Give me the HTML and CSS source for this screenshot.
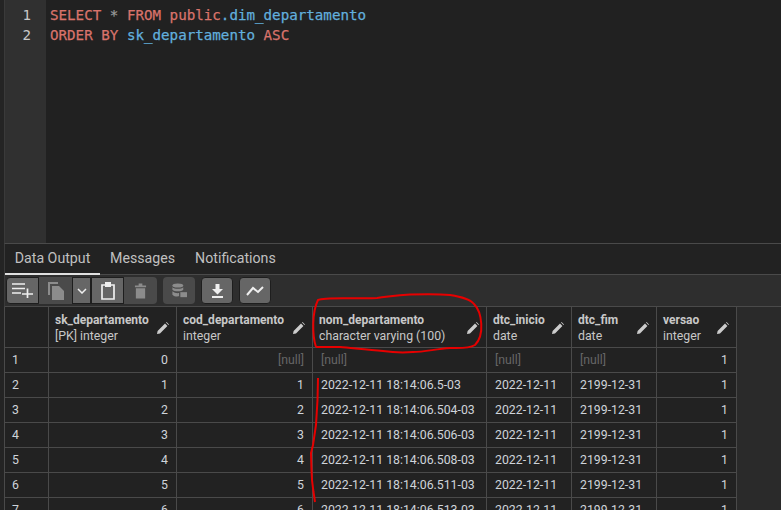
FILE: index.html
```html
<!DOCTYPE html>
<html lang="pt">
<head>
<meta charset="utf-8">
<title>Query</title>
<link rel="stylesheet" href="styles.css">
</head>
<body>
<div class="app">
  <section class="editor">
    <div class="gutter"><div>1</div><div>2</div></div>
    <div class="code">
      <div class="line"><span class="kw">SELECT</span> <span class="op">*</span> <span class="kw">FROM</span> <span class="kw">public</span><span class="id">.dim_departamento</span></div>
      <div class="line"><span class="kw">ORDER BY</span> <span class="id">sk_departamento</span> <span class="kw">ASC</span></div>
    </div>
  </section>
  <nav class="tabs">
    <div class="tab active">Data Output</div>
    <div class="tab">Messages</div>
    <div class="tab">Notifications</div>
  </nav>
  <div class="toolbar">
    <div class="group">
      <button class="btn w33 on"><svg width="21" height="15" viewBox="0 0 21 15"><path d="M0 1h13M0 5.500h13M0 10h9M10 11h11M15.500 5.500v9.500" fill="none" stroke="#efefef" stroke-width="1.700"/></svg></button>
      <button class="btn w33 off"><svg width="16" height="18" viewBox="0 0 16 18"><path d="M0 0h10v2H2v11H0z" fill="#8c8c8c"/><path d="M4 4h7l5 5v9H4z" fill="#8c8c8c"/></svg></button>
      <button class="btn w19 on"><svg width="10" height="6" viewBox="0 0 10 6"><path d="M1 1l4 4 4-4" fill="none" stroke="#efefef" stroke-width="1.500"/></svg></button>
      <button class="btn w33 on"><svg width="16" height="19" viewBox="0 0 16 19"><path d="M2 4h12v14H2z" fill="none" stroke="#efefef" stroke-width="1.700"/><path d="M5 1h6v5H5z" fill="#efefef"/></svg></button>
      <button class="btn w33 off"><svg width="13" height="16" viewBox="0 0 14 16"><path d="M1 2h12v2H1zM5 0h4v2H5zM2 5h10v11H2z" fill="#8c8c8c"/></svg></button>
    </div>
    <button class="btn w32 off solo"><svg width="15" height="17" viewBox="0 0 18 18"><ellipse cx="7" cy="3" rx="6.500" ry="2.500" fill="#8c8c8c"/><path d="M.5 5c2 2.500 11 2.500 13 0v3c-2 2.500-11 2.500-13 0zM.5 10c2 2 6 2.500 8 2v4c-3 .5-6.500 0-8-2z" fill="#8c8c8c"/><path d="M10 11h8v6h-8z" fill="#8c8c8c"/></svg></button>
    <button class="btn w32 on solo"><svg width="11" height="14" viewBox="0 0 11 14"><path d="M3.500 0h4v5H11L5.500 10.500 0 5h3.500zM0 12h11v2H0z" fill="#efefef"/></svg></button>
    <button class="btn w32 on solo"><svg width="18" height="10" viewBox="0 0 18 10"><path d="M1 9l6-7 5 4 5-5" fill="none" stroke="#efefef" stroke-width="2"/></svg></button>
  </div>
  <div class="grid">
    <div class="row head">
      <div class="cell c0"></div>
      <div class="cell c1"><div class="h"><b>sk_departamento</b><span>[PK] integer</span></div><svg class="pen" viewBox="0 0 12 12"><path d="M0 12l.6-3L8 1.600 10.400 4 3 11.400zM9 .6l.6-.6L12 2.400l-.6.6z"/></svg></div>
      <div class="cell c2"><div class="h"><b>cod_departamento</b><span>integer</span></div><svg class="pen" viewBox="0 0 12 12"><path d="M0 12l.6-3L8 1.600 10.400 4 3 11.400zM9 .6l.6-.6L12 2.400l-.6.6z"/></svg></div>
      <div class="cell c3"><div class="h"><b>nom_departamento</b><span>character varying (100)</span></div><svg class="pen" viewBox="0 0 12 12"><path d="M0 12l.6-3L8 1.600 10.400 4 3 11.400zM9 .6l.6-.6L12 2.400l-.6.6z"/></svg></div>
      <div class="cell c4"><div class="h"><b>dtc_inicio</b><span>date</span></div><svg class="pen" viewBox="0 0 12 12"><path d="M0 12l.6-3L8 1.600 10.400 4 3 11.400zM9 .6l.6-.6L12 2.400l-.6.6z"/></svg></div>
      <div class="cell c5"><div class="h"><b>dtc_fim</b><span>date</span></div><svg class="pen" viewBox="0 0 12 12"><path d="M0 12l.6-3L8 1.600 10.400 4 3 11.400zM9 .6l.6-.6L12 2.400l-.6.6z"/></svg></div>
      <div class="cell c6"><div class="h"><b>versao</b><span>integer</span></div><svg class="pen" viewBox="0 0 12 12"><path d="M0 12l.6-3L8 1.600 10.400 4 3 11.400zM9 .6l.6-.6L12 2.400l-.6.6z"/></svg></div>
    </div>
    <div class="row"><div class="cell c0">1</div><div class="cell c1 num">0</div><div class="cell c2 num null">[null]</div><div class="cell c3 null">[null]</div><div class="cell c4 null">[null]</div><div class="cell c5 null">[null]</div><div class="cell c6 num">1</div></div>
    <div class="row"><div class="cell c0">2</div><div class="cell c1 num">1</div><div class="cell c2 num">1</div><div class="cell c3">2022-12-11 18:14:06.5-03</div><div class="cell c4">2022-12-11</div><div class="cell c5">2199-12-31</div><div class="cell c6 num">1</div></div>
    <div class="row"><div class="cell c0">3</div><div class="cell c1 num">2</div><div class="cell c2 num">2</div><div class="cell c3">2022-12-11 18:14:06.504-03</div><div class="cell c4">2022-12-11</div><div class="cell c5">2199-12-31</div><div class="cell c6 num">1</div></div>
    <div class="row"><div class="cell c0">4</div><div class="cell c1 num">3</div><div class="cell c2 num">3</div><div class="cell c3">2022-12-11 18:14:06.506-03</div><div class="cell c4">2022-12-11</div><div class="cell c5">2199-12-31</div><div class="cell c6 num">1</div></div>
    <div class="row"><div class="cell c0">5</div><div class="cell c1 num">4</div><div class="cell c2 num">4</div><div class="cell c3">2022-12-11 18:14:06.508-03</div><div class="cell c4">2022-12-11</div><div class="cell c5">2199-12-31</div><div class="cell c6 num">1</div></div>
    <div class="row"><div class="cell c0">6</div><div class="cell c1 num">5</div><div class="cell c2 num">5</div><div class="cell c3">2022-12-11 18:14:06.511-03</div><div class="cell c4">2022-12-11</div><div class="cell c5">2199-12-31</div><div class="cell c6 num">1</div></div>
    <div class="row"><div class="cell c0">7</div><div class="cell c1 num">6</div><div class="cell c2 num">6</div><div class="cell c3">2022-12-11 18:14:06.513-03</div><div class="cell c4">2022-12-11</div><div class="cell c5">2199-12-31</div><div class="cell c6 num">1</div></div>
  </div>
  <svg class="marks" width="781" height="510" viewBox="0 0 781 510">
    <path d="M316 347C312 335 312 312 318 300C325 297 345 299 377 298C388 297 395 295 410 294.500C425 294 440 294 450 295C462 297 470 299 474 304C482 312 485 335 475 345C468 349 458 348 450 348C435 349 425 352 413 352C400 353 390 352 383 351C368 350 352 348 340 347C332 347 322 347 316 347" fill="none" stroke="#e60000" stroke-width="2"/>
    <path d="M318 378L317.500 400L316 425L313 445L311 453L311.500 470L312 480L313.500 492L315 502" fill="none" stroke="#e60000" stroke-width="2"/>
  </svg>
</div>
</body>
</html>
```

FILE: styles.css
```css
* { box-sizing: border-box; }
html, body { margin: 0; height: 100%; background: #222; overflow: hidden; }
.app { position: relative; width: 781px; height: 510px; overflow: hidden; font-family: Roboto, "Liberation Sans", sans-serif; color: #d2d2d2; padding-left: 4px; background: #242424; }
.editor { display: flex; height: 243px; border-left: 1px solid #3a3a3a; background: #212121; font-family: "DejaVu Sans Mono", monospace; font-size: 14.2px; line-height: 20px; }
.gutter { width: 41px; background: #303030; color: #c8c8c8; padding: 5px 15px 0 0; text-align: right; }
.code { padding: 5px 0 0 4px; }
.line { white-space: pre; -webkit-text-stroke: 0.25px; }
.kw { color: #d9736b; }
.op { color: #9a9a9a; }
.id { color: #62afdd; }
.tabs { display: flex; height: 32px; padding-bottom: 2px; background: #222; border-top: 1px solid #4a4a4a; border-bottom: 1px solid #4a4a4a; border-left: 1px solid #3a3a3a; font-size: 14.2px; }
.tab { display: flex; align-items: center; justify-content: center; padding: 0 10px; color: #c0c0c0; white-space: nowrap; }
.tab.active { width: 95px; padding: 0 0 2px; border-bottom: 2px solid #e0e0e0; margin-bottom: -3px; }
.toolbar { display: flex; align-items: center; gap: 6px; height: 32px; padding-left: 1px; background: #2e2e2e; border-bottom: 1px solid #4a4a4a; border-left: 1px solid #3a3a3a; }
.group { display: flex; }
.btn { display: flex; align-items: center; justify-content: center; height: 27px; padding: 0; border: 0; }
.btn.on { background: #666; border: 1px solid #1e1e1e; }
.btn.off { background: #4a4a4a; }
.w32 { width: 32px; }
.w33 { width: 33px; }
.w19 { width: 19px; }
.group .btn:first-child { border-radius: 4px 0 0 4px; }
.group .btn:last-child { border-radius: 0 4px 4px 0; }
.solo { border-radius: 4px; }
.grid { background: #2a2a2a; border-left: 1px solid #4a4a4a; }
.row { display: flex; width: 732px; height: 25px; background: #222; border-bottom: 1px solid #4a4a4a; font-size: 12.3px; }
.row.head { height: 41px; }
.cell { display: flex; align-items: center; padding: 0 8px; border-right: 1px solid #4a4a4a; white-space: nowrap; overflow: hidden; color: #cfd4da; }
.c0 { width: 44px; padding-left: 7px; }
.c1 { width: 128px; }
.c2 { width: 136px; }
.c3 { width: 174px; }
.c4 { width: 85px; }
.c5 { width: 85px; }
.c6 { width: 80px; }
.num { justify-content: flex-end; padding-right: 8px; }
.null { color: #666; }
.head .cell { justify-content: space-between; padding: 0 7px 0 6px; }
.h { display: flex; flex-direction: column; line-height: 16px; padding-top: 1px; }
.h b { font-weight: 700; font-size: 12px; color: #c8c8c8; }
.h span { color: #c8c8c8; }
.pen { width: 12px; height: 12px; fill: #ccc; margin-top: 1px; flex: none; }
.marks { position: absolute; left: 0; top: 0; pointer-events: none; }
```
